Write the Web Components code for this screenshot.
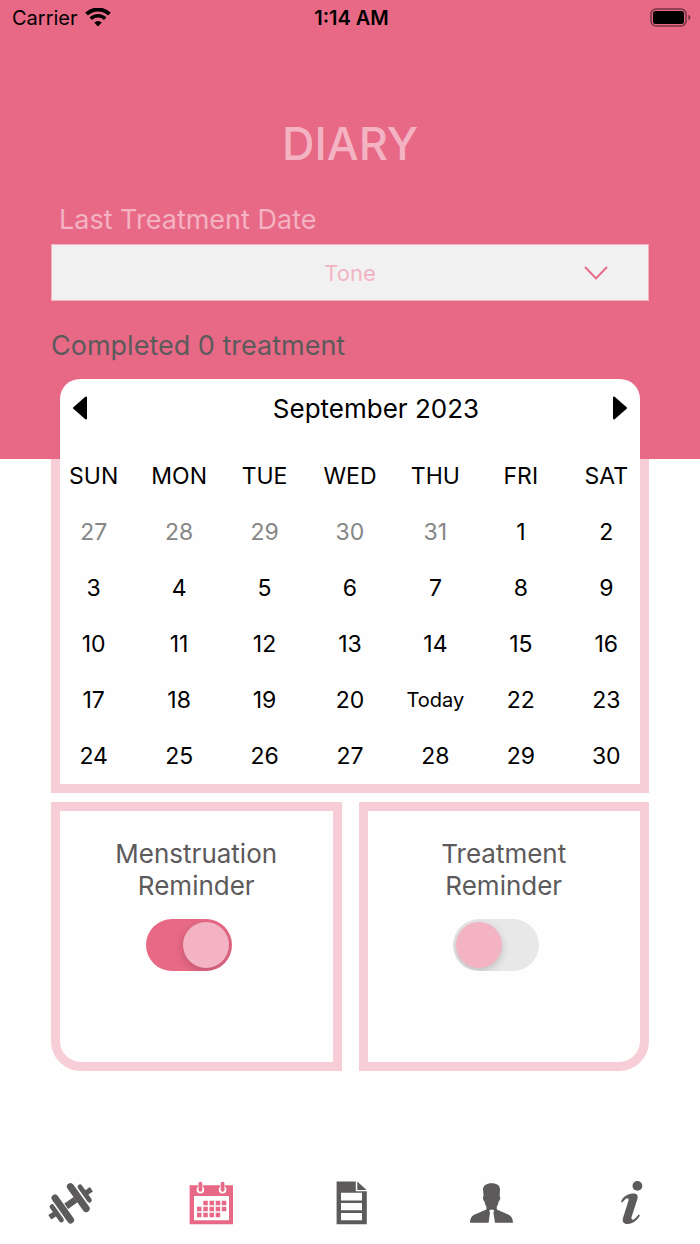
<!DOCTYPE html>
<html lang="en">
<head>
<meta charset="utf-8">
<meta name="viewport" content="width=device-width, initial-scale=1">
<title>Diary</title>
<style>
  html, body {
    margin: 0;
  }
  body {
    --pink: #e86986;
    --pink-soft: #f3b3c3;
    --pink-pale: #f7ced8;
    --grey: #5c5a5b;
    --paper: #fefefe;
    background: var(--paper);
    font-family: Inter, "Liberation Sans", sans-serif;
    color: #000;
  }
</style>
</head>
<body>
<diary-page></diary-page>

<script>
const define = (name, html, setup) => {
  const template = document.createElement('template');
  template.innerHTML = html;
  window.customElements.define(name, class extends HTMLElement {
    constructor() {
      super();
      this.attachShadow({ mode: 'open' });
      this.shadowRoot.appendChild(template.content.cloneNode(true));
    }
    connectedCallback() {
      if (setup) setup(this, this.shadowRoot);
    }
  });
};

define('status-bar', `
  <style>
    :host {
      display: grid;
      grid-template-columns: 1fr auto 1fr;
      align-items: center;
      height: 36px;
      padding: 0 9px 0 12px;
      font-size: 20px;
    }
      .carrier {
        display: flex;
        align-items: center;
        gap: 7px;
      }
      .time {
        font-weight: 600;
      }
      .battery {
        justify-self: end;
      }
      svg {
        display: block;
      }
  </style>
  <div class="carrier"><span>Carrier</span>
    <svg width="26" height="20" viewBox="0 0 26 20" fill="none" stroke="#000" stroke-width="4" aria-hidden="true">
      <path d="M1.600 6.200a16.200 16.200 0 0 1 22.800 0"/>
      <path d="M5.800 10.800a10.200 10.200 0 0 1 14.400 0" stroke-width="3.600"/>
      <path d="M9.200 14.600a5.400 5.400 0 0 1 7.600 0L13 18.400z" fill="#000" stroke="none"/>
    </svg>
  </div>
  <span class="time">1:14 AM</span>
  <svg class="battery" width="41" height="20" viewBox="0 0 41 20" aria-hidden="true">
    <rect x="1" y="1" width="35" height="17" rx="5" fill="none" stroke="#000" stroke-opacity=".5" stroke-width="1.600"/>
    <rect x="3" y="3" width="31" height="13" rx="2.500"/>
    <path d="M38.400 6.500q4 3 0 6z" fill-opacity=".5"/>
  </svg>
`);

define('treatment-select', `
  <style>
    :host {
      display: block;
    }
      label {
        display: block;
        padding: 0 8px;
        font-size: 27px;
        line-height: 32px;
        color: var(--pink-soft);
      }
      .field {
        display: grid;
        align-items: center;
        margin-top: 8px;
      }
        select, svg {
          grid-area: 1 / 1;
        }
        select {
          appearance: none;
          box-sizing: border-box;
          width: 100%;
          height: 57px;
          padding: 0;
          border: 1px solid var(--pink-soft);
          border-radius: 0;
          background: #f1f1f1;
          font: inherit;
          font-size: 22px;
          text-align: center;
          text-align-last: center;
          color: var(--pink-soft);
        }
        svg {
          justify-self: end;
          margin-right: 41px;
          pointer-events: none;
        }
  </style>
  <label for="treatment">Last Treatment Date</label>
  <div class="field">
    <select id="treatment"><option>Tone</option></select>
    <svg width="24" height="14" viewBox="0 0 24 14" fill="none" stroke="var(--pink)" stroke-width="2" aria-hidden="true"><path d="M1 1L12 12.400L23 1"/></svg>
  </div>
`);

define('month-calendar', `
  <style>
    :host {
      display: block;
      padding: 0 9px 9px;
      background: linear-gradient(transparent 80px, var(--pink-pale) 80px);
    }
      .card {
        border-radius: 20px 20px 0 0;
        background: var(--paper);
      }
      header {
        display: flex;
        align-items: center;
        height: 58px;
        padding-bottom: 10px;
      }
        h2 {
          flex: 1;
          margin: 0;
          font-size: 26px;
          font-weight: 400;
          text-align: center;
        }
        button {
          padding: 0;
          border: 0;
          background: none;
          font: inherit;
          color: inherit;
        }
        header button {
          height: 40px;
          padding: 0 12px;
        }
        .prev {
          padding-right: 64px;
        }
        svg {
          display: block;
        }
      table {
        width: calc(100% + 18px);
        margin: 0 -9px;
        border-collapse: collapse;
        table-layout: fixed;
      }
        th, td {
          height: 56px;
          padding: 0;
          font-size: 23px;
          font-weight: 400;
          text-align: center;
        }
        th {
          height: 57px;
        }
        td button {
          width: 100%;
          height: 56px;
        }
        .other {
          color: #868686;
        }
        .today {
          font-size: 20px;
        }
  </style>
  <div class="card">
    <header>
      <button class="prev" aria-label="Previous month"><svg width="16" height="24" viewBox="0 0 16 24"><path d="M14 1.500V22.500L2 12z" stroke="#000" stroke-width="2" stroke-linejoin="round"/></svg></button>
      <h2>September 2023</h2>
      <button aria-label="Next month"><svg width="16" height="24" viewBox="0 0 16 24"><path d="M2 1.500V22.500L14 12z" stroke="#000" stroke-width="2" stroke-linejoin="round"/></svg></button>
    </header>
    <table>
      <thead><tr></tr></thead>
      <tbody></tbody>
    </table>
  </div>
`, (host, root) => {
  const head = root.querySelector('thead tr');
  const body = root.querySelector('tbody');
  if (body.rows.length) return;
  for (const day of ['SUN', 'MON', 'TUE', 'WED', 'THU', 'FRI', 'SAT']) {
    const th = document.createElement('th');
    th.scope = 'col';
    th.textContent = day;
    head.appendChild(th);
  }
  const today = 21;
  for (let week = 0; week < 5; week++) {
    const row = body.insertRow();
    for (let i = 0; i < 7; i++) {
      const date = new Date(2023, 7, 27 + week * 7 + i);
      const button = document.createElement('button');
      button.textContent = date.getDate();
      if (date.getMonth() !== 8) {
        button.className = 'other';
      } else if (date.getDate() === today) {
        button.className = 'today';
        button.textContent = 'Today';
      }
      row.insertCell().appendChild(button);
    }
  }
});

define('reminder-card', `
  <style>
    :host {
      display: block;
      box-sizing: border-box;
      min-height: 269px;
      padding: 27px 9px;
      border: 9px solid var(--pink-pale);
      text-align: center;
    }
      label {
        display: block;
        font-size: 26px;
        line-height: 32px;
        color: var(--grey);
      }
      input {
        appearance: none;
        width: 86px;
        height: 52px;
        margin: 17px 15px 0 0;
        padding: 3px;
        border-radius: 26px;
        background: #e8e8e8;
        overflow: hidden;
      }
        input::before {
          content: "";
          display: block;
          width: 46px;
          height: 46px;
          border-radius: 50%;
          background: var(--pink-soft);
          box-shadow: 0 3px 8px rgba(0, 0, 0, .18);
        }
      input:checked {
        background: var(--pink);
      }
        input:checked::before {
          margin-left: auto;
        }
  </style>
  <label for="toggle"><slot></slot></label>
  <input id="toggle" type="checkbox" role="switch">
`, (host, root) => {
  root.querySelector('input').checked = host.hasAttribute('on');
});

define('tab-bar', `
  <style>
    :host {
      display: block;
      padding-bottom: 17px;
    }
      nav {
        display: grid;
        grid-template-columns: repeat(5, 1fr);
      }
      a {
        display: grid;
        justify-content: center;
        color: var(--grey);
      }
      a[aria-current] {
        color: var(--pink);
      }
      svg {
        display: block;
        fill: currentColor;
      }
  </style>
  <nav>
    <a href="#exercises" aria-label="Exercises">
      <svg width="48" height="48" viewBox="0 0 48 48">
        <g fill="none" stroke="currentColor" stroke-linecap="round">
          <path d="M9 19L24.600 41M24.400 7.600L40.200 29.600" stroke-width="7"/>
          <path d="M6 27.600L15.400 41M34 7.800L43.400 21.200" stroke-width="4.800"/>
          <path d="M20.200 27.200L29.600 20.600" stroke-width="6.600" stroke-linecap="butt"/>
          <path d="M3.800 38.200L11 33.400M39 14.600L45.400 10.200" stroke-width="5.400" stroke-linecap="butt"/>
        </g>
      </svg>
    </a>
    <a href="#diary" aria-label="Diary" aria-current="page">
      <svg width="48" height="48" viewBox="0 0 48 48">
        <path d="M3.600 6.300H47V45.300H3.600z"/>
        <path d="M8 17H43V41.200H8z" fill="#fefefe"/>
        <g fill="#fefefe"><circle cx="14.400" cy="10.800" r="3.800"/><circle cx="36.600" cy="10.800" r="3.800"/><path d="M12 4h5v5h-5zM34 4h5v5h-5z"/></g>
        <path d="M14.400 4.600V10.800M36.600 4.600V10.800" stroke="currentColor" stroke-width="3.800" stroke-linecap="round"/>
        <path d="M17.300 21.700h4.500v4.500h-4.500zM23.500 21.700h4.500v4.500h-4.500zM29.700 21.700h4.500v4.500h-4.500zM35.800 21.700h4.500v4.500h-4.500zM11 27.800h4.500v4.500H11zM17.300 27.800h4.500v4.500h-4.500zM23.500 27.800h4.500v4.500h-4.500zM29.700 27.800h4.500v4.500h-4.500zM35.800 27.800h4.500v4.500h-4.500zM11 33.800h4.500v4.500H11zM17.300 33.800h4.500v4.500h-4.500zM23.500 33.800h4.500v4.500h-4.500zM29.700 33.800h4.500v4.500h-4.500z"/>
      </svg>
    </a>
    <a href="#notes" aria-label="Notes">
      <svg width="48" height="48" viewBox="0 0 48 48">
        <path d="M10.600 2.400H29.800V12.200H40.800V45.200H10.600zM15 13.800V21.400H36V13.800zM15 24V31.200H36V24zM15 34V41.200H36V34z" fill-rule="evenodd"/>
        <path d="M31.300 2.600L40.600 11H31.300z"/>
      </svg>
    </a>
    <a href="#profile" aria-label="Profile">
      <svg width="48" height="48" viewBox="0 0 48 48">
        <path d="M25.600 4.200C31 4.200 34.200 6.400 34 11L33.600 17C34.800 17.600 34.200 22 32.600 22.600C32.400 24.600 31.800 26.400 30.800 27.600V30.600L41 35C45 36.600 46.800 38.600 47 43.700H29L27.400 33.600L28.200 31.800L27.200 30.800H24.200L23.200 31.800L24 33.600L22.600 43.700H4C4.200 38.600 6 36.600 10 35L20.400 30.600V27.600C19.400 26.400 18.800 24.600 18.600 22.600C17 22 16.400 17.600 17.600 17L17 11C16.800 6.600 20.400 4.200 25.600 4.200z"/>
      </svg>
    </a>
    <a href="#info" aria-label="Information">
      <svg width="48" height="48" viewBox="0 0 48 48">
        <circle cx="31.400" cy="6.900" r="4.900"/>
        <path d="M15 22.500C17 18 21 15 27 14.600C31 14.400 32.400 16.600 31.400 20L25.600 38C25 40.400 26.400 41.400 28.400 40C30 39 31.200 37.400 32.600 35.600L34 36.600C31 41.500 27 45 21.500 45C17.500 45 16 42.500 17 39L22.500 21.500C23 19.500 21.500 18.500 19.500 20C18.200 21 17.300 22.200 16.300 23.500z"/>
      </svg>
    </a>
  </nav>
`);

define('diary-page', `
  <style>
    :host {
      display: flex;
      flex-direction: column;
      min-height: 100vh;
    }
      .hero {
        padding-bottom: 97px;
        background: var(--pink);
      }
        h1 {
          margin: 79px 0 32px;
          font-size: 45px;
          font-weight: 500;
          line-height: 57px;
          text-align: center;
          color: var(--pink-soft);
        }
        treatment-select, .completed, main {
          margin: 0 51px;
        }
        .completed {
          margin-top: 29px;
          font-size: 27px;
          line-height: 32px;
          color: var(--grey);
        }
      main {
        display: grid;
        gap: 9px;
        margin-top: -80px;
      }
        .reminders {
          display: grid;
          grid-template-columns: 1fr 1fr;
          gap: 17px;
        }
          reminder-card:first-child {
            border-bottom-left-radius: 30px;
          }
          reminder-card:last-child {
            border-bottom-right-radius: 30px;
          }
      tab-bar {
        margin-top: auto;
      }
  </style>
  <div class="hero">
    <status-bar></status-bar>
    <h1>DIARY</h1>
    <treatment-select></treatment-select>
    <p class="completed">Completed 0 treatment</p>
  </div>
  <main>
    <month-calendar></month-calendar>
    <div class="reminders">
      <reminder-card on>Menstruation<br>Reminder</reminder-card>
      <reminder-card>Treatment<br>Reminder</reminder-card>
    </div>
  </main>
  <tab-bar></tab-bar>
`);
</script>
</body>
</html>
